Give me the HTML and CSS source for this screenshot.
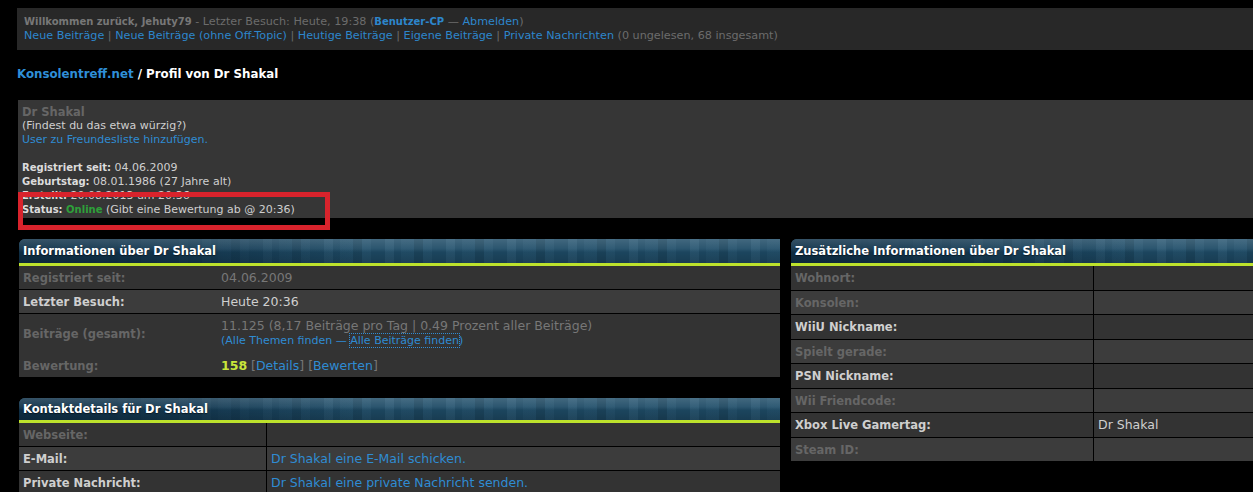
FILE: index.html
```html
<!DOCTYPE html>
<html lang="de">
<head>
    <meta charset="UTF-8">
    <title>Konsolentreff.net - Profil von Dr Shakal</title>
    <link rel="stylesheet" href="styles.css">
</head>
<body>
<div class="page">

    <!-- Welcome bar -->
    <div class="welcome">
        <div><strong class="user">Willkommen zurück, Jehuty79</strong> - Letzter Besuch: Heute, 19:38 (<a href="#" class="strong">Benutzer-CP</a> — <a href="#">Abmelden</a>)</div>
        <div><a href="#">Neue Beiträge</a> | <a href="#">Neue Beiträge (ohne Off-Topic)</a> | <a href="#">Heutige Beiträge</a> | <a href="#">Eigene Beiträge</a> | <a href="#">Private Nachrichten</a> (0 ungelesen, 68 insgesamt)</div>
    </div>

    <!-- Breadcrumb -->
    <h1 class="crumb"><a href="#">Konsolentreff.net</a> / Profil von Dr Shakal</h1>

    <!-- Profile summary -->
    <div class="profile">
        <div class="name">Dr Shakal</div>
        <div>(Findest du das etwa würzig?)</div>
        <div><a href="#">User zu Freundesliste hinzufügen.</a></div>
        <div class="spacer"></div>
        <div><b>Registriert seit:</b> 04.06.2009</div>
        <div><b>Geburtstag:</b> 08.01.1986 (27 Jahre alt)</div>
        <div><b>Erstellt:</b> 20.08.2013 um 20:36</div>
        <div><b>Status:</b> <span class="online">Online</span> (Gibt eine Bewertung ab @ 20:36)</div>
        <div class="mark"></div>
    </div>

    <div class="columns">
        <div class="col">
            <!-- Info -->
            <div class="panel">
                <div class="panel-head">Informationen über Dr Shakal</div>
                <table class="rows info">
                    <tr class="alt1">
                        <td class="label dim">Registriert seit:</td>
                        <td class="value dim">04.06.2009</td>
                    </tr>
                    <tr class="alt2">
                        <td class="label">Letzter Besuch:</td>
                        <td class="value">Heute 20:36</td>
                    </tr>
                    <tr class="alt1 joined">
                        <td class="label dim">Beiträge (gesamt):</td>
                        <td class="value dim">
                            11.125 (8,17 Beiträge pro Tag | 0.49 Prozent aller Beiträge)
                            <div class="finds">(<a href="#">Alle Themen finden</a> — <a href="#" class="focus">Alle Beiträge finden</a>)</div>
                        </td>
                    </tr>
                    <tr class="alt1">
                        <td class="label dim">Bewertung:</td>
                        <td class="value dim"><span class="score">158</span> [<a href="#">Details</a>] [<a href="#">Bewerten</a>]</td>
                    </tr>
                </table>
            </div>

            <!-- Contact -->
            <div class="panel contact">
                <div class="panel-head">Kontaktdetails für Dr Shakal</div>
                <table class="rows split">
                    <tr class="alt1">
                        <td class="label dim">Webseite:</td>
                        <td class="value"></td>
                    </tr>
                    <tr class="alt2">
                        <td class="label">E-Mail:</td>
                        <td class="value"><a href="#">Dr Shakal eine E-Mail schicken.</a></td>
                    </tr>
                    <tr class="alt1">
                        <td class="label">Private Nachricht:</td>
                        <td class="value"><a href="#">Dr Shakal eine private Nachricht senden.</a></td>
                    </tr>
                </table>
            </div>
        </div>

        <div class="col">
            <!-- Extra info -->
            <div class="panel">
                <div class="panel-head">Zusätzliche Informationen über Dr Shakal</div>
                <table class="rows split extra">
                    <tr class="alt1"><td class="label dim">Wohnort:</td><td class="value"></td></tr>
                    <tr class="alt2"><td class="label dim">Konsolen:</td><td class="value"></td></tr>
                    <tr class="alt1"><td class="label">WiiU Nickname:</td><td class="value"></td></tr>
                    <tr class="alt2"><td class="label dim">Spielt gerade:</td><td class="value"></td></tr>
                    <tr class="alt1"><td class="label">PSN Nickname:</td><td class="value"></td></tr>
                    <tr class="alt2"><td class="label dim">Wii Friendcode:</td><td class="value"></td></tr>
                    <tr class="alt1"><td class="label">Xbox Live Gamertag:</td><td class="value">Dr Shakal</td></tr>
                    <tr class="alt2"><td class="label dim">Steam ID:</td><td class="value"></td></tr>
                </table>
            </div>
        </div>
    </div>

</div>
</body>
</html>
```

FILE: styles.css
```css
body {
    margin: 0;
    padding: 0;
    background-color: #000;
    font-family: "DejaVu Sans", Verdana, sans-serif;
    overflow: hidden;
}

a {
    color: #2f8cd3;
    text-decoration: none;
}

.page {
    padding: 8px 0 0 18px;
}

/* welcome bar */
.welcome {
    margin-left: -1px;
    background-color: #282828;
    color: #6c6c6c;
    font-size: 11.2px;
    line-height: 14px;
    padding: 7px 7px 7px 7px;
}

.welcome .user {
    color: #777;
    font-size: 10px;
}

.welcome a {
    color: #2d86cc;
}

.welcome a.strong {
    font-weight: bold;
    font-size: 10px;
}

/* breadcrumb */
.crumb {
    margin: 16px 0 18px -1px;
    font-size: 11.8px;
    line-height: 16px;
    color: #fff;
}

.crumb a {
    color: #2f8fd8;
}

/* profile summary */
.profile {
    position: relative;
    background-color: #363636;
    color: #cfcfcf;
    font-size: 11px;
    line-height: 14px;
    padding: 5px 4px 2px 4px;
    height: 118px;
    box-sizing: border-box;
}

.profile .name {
    color: #666;
    font-weight: bold;
    font-size: 11.5px;
}

.profile b {
    color: #dcdcdc;
    font-size: 10px;
}

.profile .spacer {
    height: 14px;
}

.profile .online {
    color: #2ea03a;
    font-weight: bold;
    font-size: 10px;
}

.profile .mark {
    position: absolute;
    left: 0;
    top: 92px;
    width: 312px;
    height: 38px;
    box-sizing: border-box;
    border: 5px solid #d8232c;
}

/* columns */
.columns {
    display: grid;
    grid-template-columns: 761px 762px;
    column-gap: 11px;
    margin-top: 21px;
    padding-left: 1px;
}

.panel-head {
    height: 24px;
    line-height: 25px;
    padding-left: 4px;
    color: #fff;
    font-size: 11.5px;
    font-weight: bold;
    border-radius: 6px 0 0 0;
    border-bottom: 3px solid #bde22c;
    text-shadow: 0 1px 1px rgba(0, 0, 0, 0.5);
    background:
        linear-gradient(180deg, rgba(255, 255, 255, 0.16) 0, rgba(255, 255, 255, 0.06) 40%, rgba(0, 0, 0, 0.08) 55%, rgba(0, 0, 0, 0.2) 100%),
        linear-gradient(90deg, #0f3149 0, rgba(15, 49, 73, 0.7) 22%, rgba(15, 49, 73, 0) 45%),
        repeating-linear-gradient(90deg, rgba(110, 160, 190, 0.13) 0 9px, rgba(0, 0, 0, 0) 9px 16px, rgba(70, 120, 150, 0.12) 16px 29px, rgba(0, 0, 0, 0.07) 29px 38px, rgba(90, 140, 170, 0.1) 38px 47px, rgba(0, 0, 0, 0) 47px 61px),
        #1e4b66;
}

.contact {
    margin-top: 20px;
}

.contact .panel-head {
    height: 22px;
    line-height: 23px;
}

.rows {
    width: 100%;
    border-collapse: collapse;
}

.rows td {
    padding: 5px 4px 4px 4px;
    line-height: 14px;
    border-bottom: 1px solid #000;
    vertical-align: middle;
}

.rows tr.alt1 td {
    background-color: #333;
}

.rows tr.alt2 td {
    background-color: #3c3c3c;
}

.rows .label {
    font-size: 11.5px;
    font-weight: bold;
    color: #cfcfcf;
}

.rows .label.dim {
    color: #666;
}

.rows .value {
    font-size: 12.5px;
    color: #cfcfcf;
}

.rows .value.dim {
    color: #777;
}

.info .label {
    width: 190px;
}

.info tr.joined td {
    border-bottom: none;
    padding-bottom: 6px;
}

.info .finds {
    font-size: 11px;
    line-height: 15px;
    color: #2f8cd3;
}

.info .finds a.focus {
    outline: 1px dotted #2f8cd3;
}

.info .score {
    color: #c8e63a;
    font-weight: bold;
}

.split .label {
    border-right: 1px solid #000;
}

.contact .split .label {
    width: 239px;
}

.extra td {
    padding-bottom: 4.5px;
}

.extra .label {
    width: 294px;
}
```
